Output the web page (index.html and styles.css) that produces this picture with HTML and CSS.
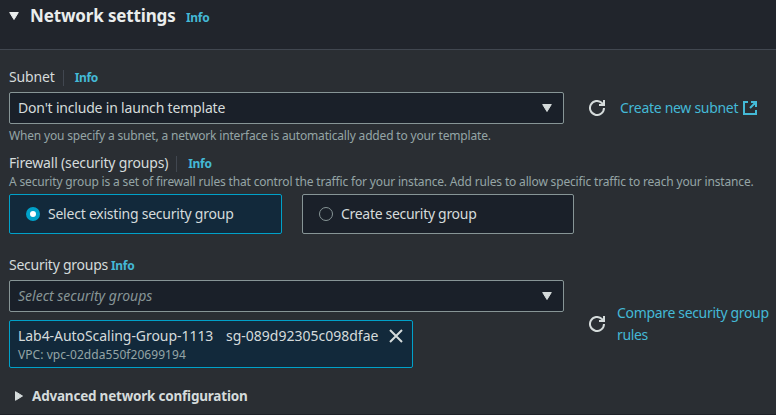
FILE: index.html
```html
<!DOCTYPE html>
<html lang="en">
<head>
<meta charset="utf-8">
<title>Network settings</title>
<link rel="stylesheet" href="styles.css">
</head>
<body>
<section class="panel">
  <header class="panel-header">
    <svg class="caret" width="10" height="8" viewBox="0 0 10 8"><path d="M.7 .5h8.6L5 7.5z" fill="currentColor" stroke="currentColor" stroke-linejoin="round"/></svg>
    <h2 class="title"><span class="t-title">Network settings</span></h2>
    <a class="info">Info</a>
  </header>
  <div class="panel-body">
    <div class="label-row subnet-label"><span class="t-subnet">Subnet</span><i class="divider"></i><a class="info">Info</a></div>
    <div class="field-row">
      <div class="select"><span class="t-dont">Don't include in launch template</span><svg class="arrow" width="10" height="8" viewBox="0 0 10 8"><path d="M.7 .5h8.6L5 7.5z" fill="currentColor" stroke="currentColor" stroke-linejoin="round"/></svg></div>
      <svg class="refresh" width="16" height="16" viewBox="0 0 16 16" fill="none" stroke="currentColor" stroke-width="2"><path d="M15 8a7 7 0 1 1-2.1-5L14 4M15 0v5h-5"/></svg>
      <a class="link create-link"><span class="t-create">Create new subnet</span><svg width="14" height="14" viewBox="0 0 14 14" fill="none" stroke="currentColor" stroke-width="2"><path d="M5 1H1v12h12V9M8 1h5v5M13 1L7 7"/></svg></a>
    </div>
    <p class="hint subnet-hint"><span class="t-hint1">When you specify a subnet, a network interface is automatically added to your template.</span></p>
    <div class="label-row firewall-label"><span class="t-firewall">Firewall (security groups)</span><i class="divider"></i><a class="info">Info</a></div>
    <p class="hint firewall-hint"><span class="t-hint2">A security group is a set of firewall rules that control the traffic for your instance. Add rules to allow specific traffic to reach your instance.</span></p>
    <div class="tiles">
      <div class="tile selected"><i class="radio"></i><span class="t-select">Select existing security group</span></div>
      <div class="tile"><i class="radio"></i><span class="t-newgroup">Create security group</span></div>
    </div>
    <div class="groups-row">
      <div class="groups">
        <div class="label-row groups-label"><span class="t-groups">Security groups</span><a class="info">Info</a></div>
        <div class="select"><span class="placeholder">Select security groups</span><svg class="arrow" width="10" height="8" viewBox="0 0 10 8"><path d="M.7 .5h8.6L5 7.5z" fill="currentColor" stroke="currentColor" stroke-linejoin="round"/></svg></div>
        <div class="token">
          <div class="token-line"><span class="token-name">Lab4-AutoScaling-Group-1113</span><span class="token-id">sg-089d92305c098dfae</span><svg class="close" width="14" height="14" viewBox="0 0 14 14" fill="none" stroke="currentColor" stroke-width="2"><path d="M1 1l12 12M13 1L1 13"/></svg></div>
          <div class="token-vpc">VPC: vpc-02dda550f20699194</div>
        </div>
      </div>
      <div class="compare">
        <svg class="refresh" width="16" height="16" viewBox="0 0 16 16" fill="none" stroke="currentColor" stroke-width="2"><path d="M15 8a7 7 0 1 1-2.1-5L14 4M15 0v5h-5"/></svg>
        <a class="link compare-link">Compare security group<br>rules</a>
      </div>
    </div>
    <div class="advanced"><svg width="8" height="10" viewBox="0 0 8 10"><path d="M.5 .7v8.6L7.5 5z" fill="currentColor" stroke="currentColor" stroke-linejoin="round"/></svg><span>Advanced network configuration</span></div>
  </div>
</section>
</body>
</html>
```
FILE: styles.css
```css
* { box-sizing: border-box; }
body { margin: 0; background: #2a2e33; color: #d5dbdb; font: 14px/22px "Noto Sans", sans-serif; white-space: nowrap; overflow: hidden; }
svg { display: block; flex: none; }
p, h2 { margin: 0; }
.panel { width: 776px; height: 415px; border-bottom: 1px solid #1e2127; }
.panel-header { height: 50px; display: flex; align-items: flex-start; background: #21252c; border-bottom: 1px solid #414750; padding: 5px 0 0 9px; color: #eaeded; }
.caret { margin-top: 7px; }
.title { margin-left: 11px; width: 156px; font-size: 17px; line-height: 22px; font-weight: 700; letter-spacing: -0.15px; }
.info { color: #44b9d6; font-size: 12px; font-weight: 700; letter-spacing: -0.3px; }
.panel-header .info { line-height: 25px; }
.panel-body { padding-left: 9px; }
.label-row { display: flex; height: 22px; align-items: baseline; }
.divider { align-self: flex-start; width: 1px; height: 16px; background: #414750; margin: 4px 11px 0 8px; }
.t-subnet { letter-spacing: -0.15px; }
.t-dont { letter-spacing: -0.19px; }
.t-create { letter-spacing: -0.29px; }
.t-hint1 { letter-spacing: -0.175px; }
.t-firewall { letter-spacing: -0.18px; }
.t-hint2 { letter-spacing: -0.163px; }
.t-select { letter-spacing: -0.23px; }
.t-newgroup { letter-spacing: -0.3px; }
.t-groups { letter-spacing: -0.25px; }
.subnet-label { margin-top: 16px; }
.field-row { margin-top: 4px; display: flex; align-items: center; }
.select { width: 555px; height: 32px; flex: none; display: flex; align-items: center; justify-content: space-between; padding: 0 11px 0 8px; border: 1px solid #879596; border-radius: 2px; background: #1a2029; }
.placeholder { font-style: italic; color: #879596; }
.refresh { margin-left: 25px; }
.link { color: #44b9d6; }
.create-link { display: flex; align-items: center; gap: 5px; margin-left: 15px; }
.hint { height: 16px; line-height: 16px; font-size: 12px; color: #95a5a6; }
.subnet-hint { margin-top: 4px; }
.firewall-label { margin-top: 8px; }
.firewall-hint { height: 20px; line-height: 16px; }
.tiles { display: flex; gap: 20px; }
.tile { width: 272px; height: 40px; display: flex; align-items: center; gap: 8px; padding-left: 16px; border: 1px solid #879596; border-radius: 2px; background: #1a2029; }
.tile.selected { width: 273px; border-color: #00a1c9; background: #12293b; }
.radio { width: 14px; height: 14px; border: 1px solid #879596; border-radius: 50%; }
.selected .radio { border: 4px solid #00a1c9; background: #fff; }
.groups-row { display: flex; margin-top: 20px; }
.groups { width: 555px; }
.groups-label { gap: 3px; margin-bottom: 4px; }
.token { width: 404px; height: 48px; margin-top: 8px; padding: 4px 8px 0; border: 1px solid #00a1c9; border-radius: 2px; background: #12293b; }
.token-line { display: flex; align-items: center; }
.token-name { width: 208px; letter-spacing: -0.05px; }
.token-id { width: 163px; }
.token-vpc { font-size: 12px; line-height: 16px; color: #95a5a6; letter-spacing: 0.06px; }
.compare { display: flex; align-items: center; height: 44px; margin-top: 48px; }
.compare-link { margin-left: 12px; letter-spacing: -0.33px; }
.advanced { margin-top: 17px; padding-left: 6px; display: flex; align-items: center; gap: 9px; font-weight: 700; font-size: 13.5px; letter-spacing: -0.21px; }
```
